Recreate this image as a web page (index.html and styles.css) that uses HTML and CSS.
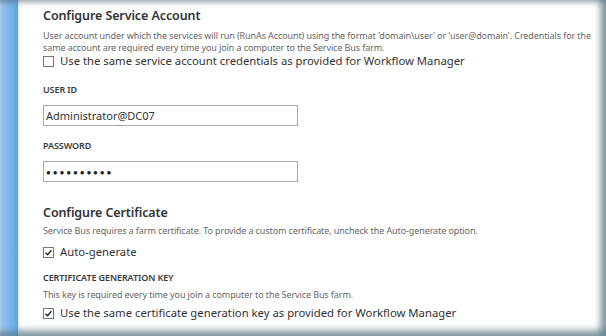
FILE: index.html
```html
<!DOCTYPE html>
<html lang="en">
<head>
    <meta charset="UTF-8">
    <meta name="viewport" content="width=device-width, initial-scale=1.0">
    <title>Configure Service Account</title>
    <link rel="stylesheet" href="styles.css">
</head>
<body>
    <div class="frame">
        <div class="side-bar"></div>
        <div class="panel">
            <h2>Configure Service Account</h2>
            <p class="desc d1">User account under which the services will run (RunAs Account) using the format 'domain\user' or 'user@domain'. Credentials for the same account are required every time you join a computer to the Service Bus farm.</p>
            <label class="check c1"><span class="box"></span>Use the same service account credentials as provided for Workflow Manager</label>

            <div class="field-label l1">USER ID</div>
            <div class="input">Administrator@DC07</div>

            <div class="field-label l2">PASSWORD</div>
            <div class="input dots">&#9679;&#9679;&#9679;&#9679;&#9679;&#9679;&#9679;&#9679;&#9679;&#9679;</div>

            <h2 class="second">Configure Certificate</h2>
            <p class="desc d2">Service Bus requires a farm certificate. To provide a custom certificate, uncheck the Auto-generate option.</p>
            <label class="check c2"><span class="box"><svg viewBox="0 0 12 12" width="9" height="9"><path d="M2 6.2 L4.8 9 L10 2.8" fill="none" stroke="#222" stroke-width="1.9"/></svg></span>Auto-generate</label>

            <div class="field-label l3">CERTIFICATE GENERATION KEY</div>
            <p class="desc d3">This key is required every time you join a computer to the Service Bus farm.</p>
            <label class="check c3"><span class="box"><svg viewBox="0 0 12 12" width="9" height="9"><path d="M2 6.2 L4.8 9 L10 2.8" fill="none" stroke="#222" stroke-width="1.9"/></svg></span>Use the same certificate generation key as provided for Workflow Manager</label>
        </div>
    </div>
</body>
</html>
```

FILE: styles.css
```css
body {
    margin: 0;
    font-family: "Noto Sans", "Open Sans", sans-serif;
    color: #333;
    background: #9fb2b8;
}
.frame {
    display: flex;
    width: 606px;
    height: 336px;
    overflow: hidden;
}
.side-bar {
    width: 18px;
    background: linear-gradient(to right, #b9d3ea 0, #8ec2ee 3px, #74b4e9 60%, #62a7e0 100%);
    box-shadow: inset 0 6px 5px -3px rgba(80, 100, 110, 0.5), inset 0 -8px 5px -3px rgba(80, 100, 110, 0.5);
}
.panel {
    flex: 1;
    background: #fff;
    padding: 7px 0 0 25px;
    box-shadow: inset 0 6px 5px -3px rgba(80, 100, 110, 0.45),
                inset -9px 0 6px -3px rgba(90, 120, 130, 0.7),
                inset 0 -9px 6px -3px rgba(90, 120, 130, 0.7);
}
h2 {
    margin: 0;
    font-size: 12.5px;
    font-weight: 600;
    color: #333;
    line-height: 18px;
    letter-spacing: -0.1px;
}
h2.second {
    margin-top: 22px;
}
.desc {
    margin: 5px 0 0;
    font-size: 9px;
    line-height: 12px;
    color: #666;
    letter-spacing: -0.1px;
}
.d2 {
    margin-top: 3px;
}
.d3 {
    margin-top: 5px;
}
.check {
    display: flex;
    align-items: center;
    font-size: 11.3px;
    line-height: 16px;
    color: #333;
}
.c1 {
    margin-top: -1px;
}
.c2 {
    margin-top: 7px;
}
.c3 {
    margin-top: 4px;
}
.box {
    width: 9px;
    height: 9px;
    border: 1px solid #777;
    margin-right: 6px;
    display: flex;
    align-items: center;
    justify-content: center;
    background: #fff;
}
.field-label {
    font-size: 9px;
    font-weight: 600;
    color: #3a3a3a;
    line-height: 12px;
    letter-spacing: -0.1px;
}
.l1 {
    margin-top: 15px;
}
.l2 {
    margin-top: 14px;
}
.l3 {
    margin-top: 12px;
}
.field-label + .input {
    margin-top: 9px;
}
.input {
    width: 251px;
    height: 19px;
    border: 1px solid #aaa;
    font-size: 11px;
    line-height: 19px;
    padding-left: 2px;
    color: #333;
}
.dots {
    font-size: 8px;
    letter-spacing: 1.9px;
    color: #222;
}
```
